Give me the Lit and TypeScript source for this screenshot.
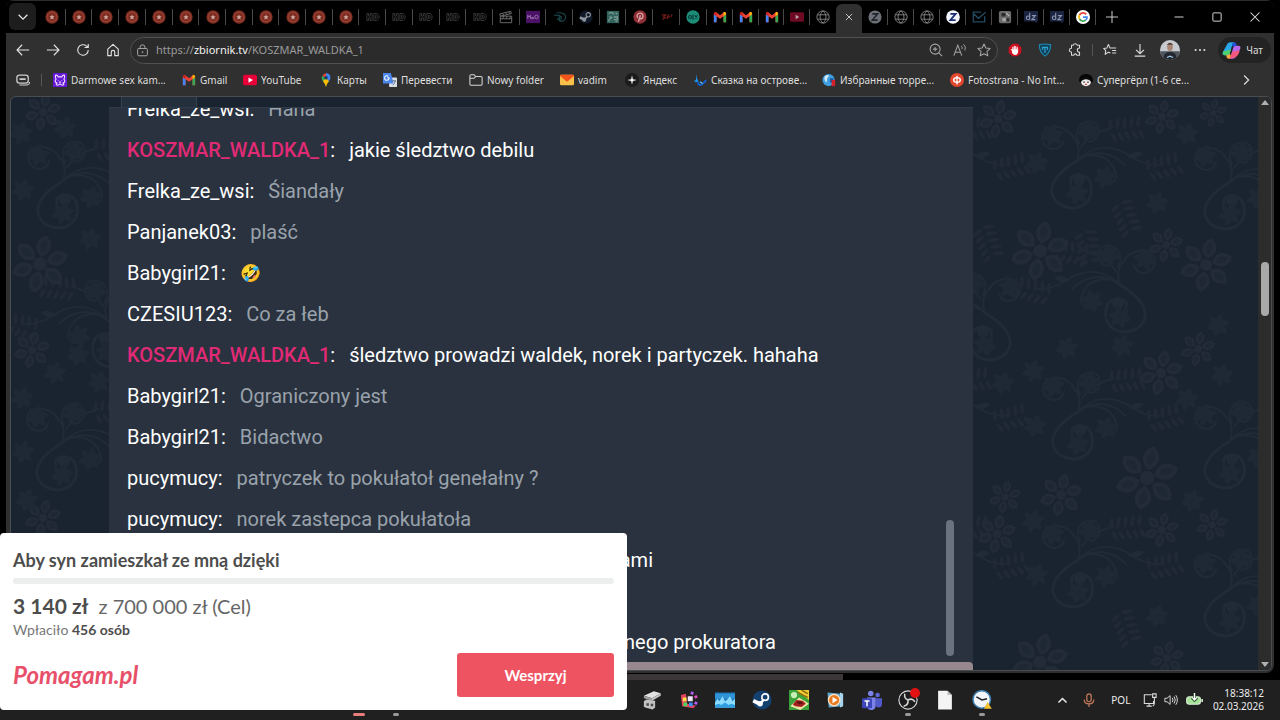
import { LitElement, html, svg, css, nothing } from "lit";
import { customElement } from "lit/decorators.js";
import { classMap } from "lit/directives/class-map.js";
import { styleMap } from "lit/directives/style-map.js";

/* ---------- icons, all on a 16 x 16 grid ---------- */

const icon = (body: unknown, size = 14) =>
  html`<svg width=${size} height=${size} viewBox="0 0 16 16" fill="none" aria-hidden="true">${body}</svg>`;

const ICONS: Record<string, unknown> = {
  star: svg`<circle cx="8" cy="8" r="7.600" fill="#7d2c22"/><circle cx="8" cy="8" r="5.400" fill="none" stroke="#944030" stroke-width="1.600"/><path d="M8 5l.9 2 2.100.2-1.600 1.500.5 2.100L8 9.700l-1.900 1.100.5-2.100L5 7.200 7.100 7z" fill="#d0aaa0"/>`,
  hd: svg`<path d="M1 4h2v3h2V4h2v8H5V9H3v3H1zM9 4h3c4 0 4 8 0 8H9zM11 6v4c2.600.4 2.600-4.400 0-4" stroke="#444" stroke-width=".9"/>`,
  clap: svg`<path d="M1.500 7h13v7.500h-13zM1.500 7l-.6-2.600L13.500 1.500l.6 2.500-12 3M4 3.800l1.600 2.300M7.500 3l1.600 2.300M11 2.200l1.500 2.300M1.500 10h13M4 10l1.500-3M8 10l1.500-3M12 10l1.500-3" stroke="#767676"/>`,
  max: svg`<path d="M0 1h16v14H0z" fill="#4b1166"/><path d="M2 10V6l1.500 2L5 6v4M6.500 8.500h2v1.500h-2zM14 8a2 2 0 1 1-4 0 2 2 0 0 1 4 0" stroke="#a078b4" stroke-width="1"/>`,
  disney: svg`<path d="M4 3.500c6-1.500 11 1 10.500 5S10 14 7 12M7.500 5.500v6.500M1 6c3-.5 6 .5 9 2M10.500 9.500c-2.500-1-5-.5-5.500.8 1 1.700 4 1.700 5.500.7" stroke="#1b4448" stroke-width="1.200"/>`,
  steam: svg`<circle cx="8" cy="8" r="7.500" fill="#101827"/><path d="M1 8.500l5 2.200" stroke="#8e959f" stroke-width="3"/><circle cx="6" cy="11" r="2.300" fill="#8e959f"/><path d="M6 11l4-4.500" stroke="#8e959f" stroke-width="2"/><circle cx="10.500" cy="5.500" r="2.500" fill="#101827" stroke="#8e959f" stroke-width="1.200"/>`,
  teal: svg`<path d="M1 1h14v14H1z" fill="#31635d"/><path d="M3 4c3-2 5-1 6 1M11 3l2 2M3 13c0-3 3-3 4-5M9 8h4v3H9M4 8h2M11 13h2" stroke="#7d9a92" stroke-width="1.500"/>`,
  pin: svg`<circle cx="8" cy="8" r="7.600" fill="#8e2f36"/><path d="M6.200 13.500L8.500 6M5.500 9C3.800 7 5 3.600 8.200 3.600c4.600 0 3.800 6.400.6 6.400-1 0-1.500-.8-1.500-.8" stroke="#d8a5a8" stroke-width="1.500"/>`,
  red: svg`<path d="M2 5.500h4.500L4 8l2 .5L3 11M8 10.500c.5-4 1.500-5 2.500-5M9 8h2.500M13.500 5l-.5 3" stroke="#6d1a16" stroke-width="1.500"/>`,
  olx: svg`<circle cx="8" cy="8" r="7.600" fill="#1c8d77"/><circle cx="4.600" cy="8" r="1.700" stroke="#063a33" stroke-width="1.200"/><path d="M8 5v6M10 6l3 4M13 6l-3 4" stroke="#063a33" stroke-width="1.300"/>`,
  gmail: svg`<path d="M1 3.500V14h3V7l4 3 4-3v7h3V3.500L13 2 8 6 3 2z" fill="#ea4335"/><path d="M1 5v9h3V7z" fill="#4285f4"/><path d="M15 5v9h-3V7z" fill="#34a853"/><path d="M12 7V2.800C13.500 1.500 15 2.500 15 4.500z" fill="#fbbc04"/><path d="M4 7V2.800C2.500 1.500 1 2.500 1 4.500z" fill="#c5221f"/>`,
  ytdim: svg`<path d="M0 4q0-1.500 1.500-1.500h13Q16 2.500 16 4v8q0 1.500-1.500 1.500h-13Q0 13.500 0 12z" fill="#6e0a24"/><path d="M6.500 5.500v5l4-2.500z" fill="#bda6ab"/>`,
  youtube: svg`<path d="M0 4q0-2 2-2h12q2 0 2 2v8q0 2-2 2H2q-2 0-2-2z" fill="#e8003a"/><path d="M6.300 5v6l5-3z" fill="#fff"/>`,
  globe: svg`<circle cx="8" cy="8" r="7" stroke="#8a8a8a"/><path d="M1.500 5.500h13M1.500 10.500h13M8 1c-4.500 4-4.500 10 0 14M8 1c4.500 4 4.500 10 0 14" stroke="#8a8a8a"/>`,
  zdim: svg`<circle cx="8" cy="8" r="7.500" fill="#6d7077"/><path d="M5 4.500h6L5 11.500h6" stroke="#20242c" stroke-width="1.900"/>`,
  zon: svg`<circle cx="8" cy="8" r="7.800" fill="#f3f6ff"/><path d="M5 4.500h6L5 11.500h6" stroke="#1c2f74" stroke-width="2"/>`,
  mail: svg`<path d="M14.500 7v6.500h-13v-11h9M1.500 4l6 5.500 8-7" stroke="#234a63" stroke-width="1.500"/>`,
  pic: svg`<rect x="1" y="1" width="14" height="14" rx="2" fill="#6b6b6b"/><path d="M4 3.500h5l-1 4H4zM9.500 9.500h3.500V13H10z" fill="#2b2b2b"/><path d="M5 9h4v4H5z" fill="#a5a5a5"/><path d="M9 3l4 4" stroke="#b8b8b8" stroke-width="1.500"/>`,
  dz: svg`<path d="M0 1h16v11l-2 3-2-2H0z" fill="#1b2440"/><path d="M6.500 3v8M6.500 8a2 2 0 1 1-3.600 0 2 2 0 0 1 3.600 0M9 6.500h4L9 11h4" stroke="#8a93ad" stroke-width="1.300"/>`,
  google: svg`<circle cx="8" cy="8" r="8" fill="#fff"/><path d="M11.700 5A4.600 4.600 0 0 0 4 5.700" stroke="#ea4335" stroke-width="2"/><path d="M4 5.700a4.600 4.600 0 0 0 0 4.600" stroke="#fbbc04" stroke-width="2"/><path d="M4 10.300a4.600 4.600 0 0 0 7.200 1" stroke="#34a853" stroke-width="2"/><path d="M8 8h4.600c0 1.500-.5 2.500-1.400 3.300" stroke="#4285f4" stroke-width="2"/>`,
  close: svg`<path d="M3 3l10 10M13 3L3 13" stroke="#e4e4e4" stroke-width="1.300"/>`,
  plus: svg`<path d="M8 0v16M0 8h16" stroke="#c4c4c4" stroke-width="1.400"/>`,
  min: svg`<path d="M2 8h12" stroke="#d8d8d8" stroke-width="1.300"/>`,
  square: svg`<rect x="2.500" y="2.500" width="11" height="11" rx="1" stroke="#d8d8d8" stroke-width="1.300"/>`,
  shut: svg`<path d="M2 2l12 12M14 2L2 14" stroke="#e4e4e4" stroke-width="1.400"/>`,
  down: svg`<path d="M3 5.500l5 5 5-5" stroke="#e2e2e2" stroke-width="1.500"/>`,
  up: svg`<path d="M3 10.500l5-5 5 5" stroke="#e8e8e8" stroke-width="1.900"/>`,
  right: svg`<path d="M5.500 2L11.500 8l-6 6" stroke="#dedede" stroke-width="1.600"/>`,
  back: svg`<path d="M15 8H1.500M7 2L1.200 8 7 14" stroke="#e0e0e0" stroke-width="1.300"/>`,
  fwd: svg`<path d="M1 8h13.500M9 2l5.800 6L9 14" stroke="#e0e0e0" stroke-width="1.300"/>`,
  reload: svg`<path d="M14 8a6 6 0 1 1-2-4.500L14 5M14 1v4.200H9.800" stroke="#e0e0e0" stroke-width="1.300"/>`,
  home: svg`<path d="M2 7l6-5.500L14 7v7.500H10V10.500q0-2-2-2t-2 2v4H2z" stroke="#e0e0e0" stroke-width="1.300" stroke-linejoin="round"/>`,
  lock: svg`<rect x="2" y="5.500" width="12" height="9" rx="1.500" stroke="#a8a8a8" stroke-width="1.200"/><path d="M5 5.500V4a3 3 0 0 1 6 0v1.500" stroke="#a8a8a8" stroke-width="1.200"/><circle cx="8" cy="10" r="1" fill="#a8a8a8"/>`,
  zoom: svg`<circle cx="7" cy="7" r="5.700" stroke="#a5a5a5" stroke-width="1.200"/><path d="M11 11l4 4M4.500 7h5M7 4.500v5" stroke="#a5a5a5" stroke-width="1.200"/>`,
  read: svg`<path d="M1 14.500L5.500 2.500 10 14.500M2.600 10.500h5.800" stroke="#a5a5a5" stroke-width="1.200"/><path d="M9.500 3.500q1.500 1.500.8 3.500M12 1.500Q15.500 4.500 13.500 8.500" stroke="#a5a5a5" stroke-width="1.100"/>`,
  fav: svg`<path d="M8 1.200l2.100 4.500 4.900.6-3.600 3.400.9 4.900L8 12.200l-4.300 2.400.9-4.900L1 6.300l4.900-.6z" stroke="#a5a5a5" stroke-width="1.200" stroke-linejoin="round"/>`,
  hand: svg`<path d="M5 .8h6L15.200 5v6L11 15.200H5L.8 11V5z" fill="#cf1020"/><path d="M5.500 8V5M7.200 8V3.700M8.900 8V4M10.600 9V5.300M5 8.500l-1.200-1M5 8h6v2q-.3 3-3 3Q5.500 13 5 10z" stroke="#fff" fill="#fff" stroke-width="1.200" stroke-linecap="round"/>`,
  shield: svg`<path d="M1.500 2q6.500-1.500 13 0-.2 9-6.500 13Q1.700 11 1.500 2z" fill="#12415a" stroke="#1a8db8" stroke-width="1.200"/><path d="M4.500 5h7M8 5v6.500M5.300 5v3M10.700 5v3" stroke="#2ba6d0" stroke-width="1.300"/>`,
  puzzle: svg`<path d="M4 2.500h2Q6.500.8 8.300.8T10.600 2.500h2.600v3.300q-2.600.2-2.600 2.400t2.600 2.400v3.300h-3.200q-.2-1.500-1.700-1.500t-1.700 1.500H4v-3.500Q1.500 10.200 1.500 8.200T4 6z" stroke="#dadada" stroke-width="1.200" stroke-linejoin="round"/>`,
  favs: svg`<path d="M8.500 11.500L6 10.500l-3.500 2.500.6-4.300L.8 6.200l3.700-.6L6.200 1.800l1.700 3.800H15M10.500 8.500H15M10.500 11.500H15" stroke="#dadada" stroke-width="1.200" stroke-linejoin="round"/>`,
  download: svg`<path d="M8 1v11M3.500 7.800L8 12.200l4.500-4.400M2 15h12" stroke="#dadada" stroke-width="1.300"/>`,
  dots: svg`<circle cx="3" cy="8" r="1.200" fill="#ddd"/><circle cx="8" cy="8" r="1.200" fill="#ddd"/><circle cx="13" cy="8" r="1.200" fill="#ddd"/>`,
  avatar: svg`<defs><clipPath id="av"><circle cx="8" cy="8" r="8"/></clipPath></defs><g clip-path="url(#av)"><path d="M0 0h16v16H0z" fill="#c7cbd0"/><path d="M0 9h16v7H0z" fill="#4f565f"/><path d="M2.500 16q0-6.500 5.500-6.500T13.500 16z" fill="#22262e"/><ellipse cx="8" cy="5.500" rx="2.300" ry="3.200" fill="#a88474"/><path d="M5.500 4Q8 .5 10.500 4 8 3 5.500 4" fill="#4b3b33"/><path d="M5.500 14l2.500-1 2.500 1" stroke="#9ec8e8"/></g>`,
  copilot: svg`<path d="M4.500 2.500Q5 1 7 1h3.500q-1.500.5-2 2.500L6.500 10.500Q6 12 4 12H2Q0 12 .6 9.500z" fill="#2aa6ea"/><path d="M.8 9Q.5 12 2.500 12H4q2 0 2.500-1.500L7.500 7z" fill="#4fd06a"/><path d="M11.500 13.500Q11 15 9 15H5.500q1.500-.5 2-2.500L9.500 5.500Q10 4 12 4h2q2 0 1.400 2.500z" fill="#b867e8"/><path d="M15 8q-1 4-3.500 5.500T5.500 15q1.500-.5 2-2.500L8.500 9z" fill="#f4587c"/><path d="M8.500 3.500Q9 1 10.500 1t2 3H12q-2 0-2.500 1.500z" fill="#2452d8"/><path d="M7.500 12.500Q7 15 5.500 15t-2-3H4q2 0 2.500-1.500z" fill="#f6a63c"/>`,
  stack: svg`<rect x="1" y="2.500" width="13" height="9" rx="3" stroke="#ccc" stroke-width="1.500"/><path d="M4 7h7" stroke="#ccc" stroke-width="2"/><path d="M4 13.800h8.500q3 0 3-3.500" stroke="#ccc" stroke-width="1.200"/>`,
  cat: svg`<rect width="16" height="16" rx="1" fill="#6519d8"/><path d="M3 2.500Q5 2 6 4.500h4Q11 2 13 2.500q1 2.500-.5 4.500Q15 10 11.500 11.500q2 2-.5 2.500-1.500 0-3-1.500Q6.500 14 5 14q-2.500-.5-.5-2.500Q1 10 3.500 7 2 5 3 2.500zM6 8v.5M10 8v.5M7 10q1 1 2 0" stroke="#f2dcff" stroke-width="1.300"/>`,
  maps: svg`<path d="M8 16Q7 12 4.500 9.500 2 6 4 3L8 6z" fill="#34a853"/><path d="M4 3Q5.500.5 8 .3L8 6z" fill="#ea4335"/><path d="M8 .3q5 0 5 5.200 0 2-1.500 4L8 6z" fill="#4285f4"/><path d="M11.500 9.500Q9 12 8 16 7 12 4.500 9.500L8 6z" fill="#fbbc04"/><circle cx="8" cy="5.500" r="2" fill="#17395e"/>`,
  translate: svg`<rect x="7" y="5" width="9" height="11" rx="1" fill="#dbe0e6"/><path d="M0 0h9l3 12H0z" fill="#4a86ec"/><path d="M7 5.500H4.800M7 5.500A2.600 2.600 0 1 1 6 3.700" stroke="#fff" stroke-width="1.200"/><path d="M10 9h5M12.500 8v1M11 14q3-2 3-5" stroke="#5c6d84"/>`,
  folder: svg`<path d="M1 3.500Q1 2 2.500 2H6l1.500 2h6Q15 4 15 5.500v7Q15 14 13.500 14h-11Q1 14 1 12.500zM1 6h5l1.500-2" stroke="#d5d5d5" stroke-width="1.200"/>`,
  envelope: svg`<rect y="2" width="16" height="12" rx="1.500" fill="#f7c04a"/><path d="M0 3.500Q0 2 1.500 2h13Q16 2 16 3.500L8 10z" fill="#f2541b"/>`,
  yandex: svg`<circle cx="8" cy="8" r="8" fill="#1b1b1b"/><path d="M8 2.500l1 4.500 4.500 1L9 9l-1 4.500L7 9 2.500 8 7 7z" fill="#fff"/>`,
  bird: svg`<path d="M3.500 1l1 5 2 4-3 .5-2.500-1.500 2.500-1z" fill="#1a9df2"/><path d="M5 8l2.500 4.500L11 12l2-3.500 3-1-1 2.500-3.500 3.500-3.500 1.500-3-2z" fill="#1363d6"/><path d="M8 10l3 2" stroke="#5cc5ff" stroke-width="1.500"/>`,
  earth: svg`<circle cx="7.500" cy="8" r="7" fill="#3f9fe0"/><path d="M3 4q3-3 5-1l-2 3-1 5Q2 8 3 4z" fill="#d5e9f5"/><path d="M9 6h4v5H9z" fill="#1c5aa0"/><path d="M11 8h4v7h-4z" fill="#d4202c"/>`,
  foto: svg`<circle cx="8" cy="8" r="8" fill="#e2472d"/><ellipse cx="8" cy="8" rx="3.800" ry="2.700" stroke="#fff" stroke-width="1.600"/><path d="M8 3v10" stroke="#fff" stroke-width="1.600"/>`,
  girl: svg`<path d="M0 9Q0 1 8 1t8 8l-2 2H2z" fill="#050505"/><ellipse cx="8" cy="10.500" rx="5.500" ry="4.500" fill="#f0ebe8"/><path d="M2.500 9Q8 5 13.500 9V6Q8 2 2.500 6z" fill="#0a0a0a"/><path d="M5 10.500h1.500M9.500 10.500H11" stroke="#111" stroke-width="1.300"/><path d="M7 13h2" stroke="#c23a3a" stroke-width="1.200"/>`,
};

/* Taskbar programs */
const APPS: Record<string, unknown> = {
  drive: svg`<path d="M1.500 4.500l8-3.500 5.500 1.500-7 4z" fill="#e3e3e3"/><path d="M1.500 4.500L8 6.500v2l-6.500-2z" fill="#9d9d9d"/><path d="M8 6.500l7-4v2l-7 4z" fill="#c4c4c4"/><path d="M1.500 9l2-1.500 7 1V14l-2 1.500-6-1.500-1-1z" fill="#c2c2c2"/><path d="M3.500 10.500h2v2h-2zM7 11h2v2H7z" fill="#4a4a4a"/>`,
  cubes: svg`<path d="M1.500 4l4-1 1 8 7 1.500-2 2-9-1.500z" fill="#e7425c"/><path d="M3 6h3v3H3z" fill="#ffe14a"/><path d="M3.500 10h3v3h-3z" fill="#4fd35d"/><path d="M7 5h4v4H7z" fill="#f1e6fa"/><path d="M8 10h3v3H8z" fill="#3e8cf5"/><path d="M10 1l2 1-1 2-2-1zM13 9l2 1-1 2-2-1z" fill="#b75cff"/><path d="M12 5l2-1 1 2-2 1z" fill="#e84cc4"/>`,
  graph: svg`<path d="M0 2h16v12H0z" fill="#1d78bd"/><path d="M0 3h16v4H0z" fill="#2f93d6"/><path d="M0 10l2-3 1.500 2L6 5l2 4 1.500-1L12 5l2 4 2-2v7H0z" fill="#8bdcff"/><path d="M0 12l3-1 2 1 3-2 3 2 2-1 3 1v2H0z" fill="#2d9fe2"/>`,
  steamApp: svg`<circle cx="8" cy="8" r="7.600" fill="#14406f"/><path d="M1 8.500l5 2.500" stroke="#fff" stroke-width="3"/><circle cx="6.500" cy="11" r="2.200" fill="#fff"/><path d="M6.500 11L10 7" stroke="#fff" stroke-width="2"/><circle cx="10.500" cy="5.700" r="2.600" fill="#14406f" stroke="#fff" stroke-width="1.300"/>`,
  game: svg`<path d="M0 0h16v16H0z" fill="#3aa33a"/><path d="M6 0h10v8z" fill="#f0cf35"/><path d="M7 2l8 4M10 0l5 3" stroke="#946f10" stroke-width="1.200"/><circle cx="4" cy="4" r="2.500" fill="#c8f0b8"/><path d="M1 13l7-7 8 5-7 5z" fill="#f0e4a8"/><path d="M3 11.500l3-3.500 5 .5 2.500 2.500-3.500 2.500-5-.5z" fill="#a52020"/><path d="M5.500 9.500l3.500-.5 2.500 1.500-3 1z" fill="#5a1313"/>`,
  player: svg`<path d="M2 2l11 1 1 10-11 1z" fill="#5fa7cf"/><path d="M12 2l2.500 1v10L12 14z" fill="#a8d4ec"/><circle cx="7.300" cy="8" r="4.600" fill="#e97c22" stroke="#fde2c2" stroke-width="1"/><path d="M6 5.500v5l4-2.500z" fill="#fff"/>`,
  teams: svg`<circle cx="7" cy="2.700" r="2.200" fill="#7b83eb"/><circle cx="12.500" cy="4" r="1.800" fill="#6068d8"/><path d="M4 6h7v6q0 4-3.500 4T4 12z" fill="#7b83eb"/><path d="M11 6.500h5V11q0 3-2.500 3T11 12z" fill="#5059c9"/><rect y="6.500" width="8" height="8" rx="1" fill="#3c46b8"/><path d="M2 8.800h4M4 9v4" stroke="#fff" stroke-width="1.200"/>`,
  obs: svg`<circle cx="8" cy="8" r="7.300" fill="#1c1b1d" stroke="#d6d6d6" stroke-width=".9"/><path d="M8 8Q4.500 6.500 5.500 3M8 8q3.500-2 5.500 1.500M8 8q.5 4-3.500 5" stroke="#d6d6d6" stroke-width="1.200"/>`,
  page: svg`<path d="M2.500 .5h7.500L13.500 4v11.500h-11z" fill="#f4f4f4"/><path d="M10 .5V4h3.500z" fill="#b9b9b9"/>`,
  clock: svg`<circle cx="7.800" cy="7.500" r="7" fill="#f2f6fa" stroke="#3f7fb0" stroke-width="1.200"/><path d="M3.500 5.500L8 8l4-1" stroke="#222" stroke-width="1.200"/><path d="M12.500 9.500l3.300 5.500H9.500z" fill="#f5c430"/>`,
};

/* ---------- data ---------- */

type Tab = { i: string; t: string; live?: boolean };
const rep = (n: number, i: string, t: string): Tab[] => Array.from({ length: n }, () => ({ i, t }));

const OLD_TABS: Tab[] = [
  ...rep(12, "star", "Video"), ...rep(5, "hd", "HD"),
  { i: "clap", t: "Film" }, { i: "max", t: "Max" }, { i: "disney", t: "Disney" }, { i: "steam", t: "Steam" },
  { i: "teal", t: "Photo" }, { i: "pin", t: "Pinterest" }, { i: "red", t: "Site" }, { i: "olx", t: "OLX" },
];
const NEW_TABS: Tab[] = [
  ...rep(3, "gmail", "Gmail"), { i: "ytdim", t: "YouTube" }, { i: "globe", t: "Page" },
  { i: "close", t: "Close tab", live: true }, { i: "zdim", t: "Zbiornik" }, ...rep(2, "globe", "Page"),
  { i: "zon", t: "Zbiornik" }, { i: "mail", t: "Mail" }, { i: "pic", t: "Pictures" }, ...rep(2, "dz", "dz"),
  { i: "google", t: "Google" },
];

/* w: relative share of the favorites bar */
const BOOKMARKS = [
  { i: "cat", t: "Darmowe sex kam...", w: 129 }, { i: "gmail", t: "Gmail", w: 61 },
  { i: "youtube", t: "YouTube", w: 76 }, { i: "maps", t: "Карты", w: 64 },
  { i: "translate", t: "Перевести", w: 86 }, { i: "folder", t: "Nowy folder", w: 91 },
  { i: "envelope", t: "vadim", w: 65 }, { i: "yandex", t: "Яндекс", w: 68 },
  { i: "bird", t: "Сказка на острове...", w: 129 }, { i: "earth", t: "Избранные торре...", w: 128 },
  { i: "foto", t: "Fotostrana - No Int...", w: 129 }, { i: "girl", t: "Супергёрл (1-6 се...", w: 126 },
];

/* end: right edge of a line that starts under the fundraiser card */
type Message = { who?: string; text: string; host?: boolean; emoji?: boolean; end?: number };
const HOST = "KOSZMAR_WALDKA_1";
const MESSAGES: Message[] = [
  { who: "Frelka_ze_wsi", text: "Hana" },
  { who: HOST, text: "jakie śledztwo debilu", host: true },
  { who: "Frelka_ze_wsi", text: "Śiandały" },
  { who: "Panjanek03", text: "plaść" },
  { who: "Babygirl21", text: "🤣", emoji: true },
  { who: "CZESIU123", text: "Co za łeb" },
  { who: HOST, text: "śledztwo prowadzi waldek, norek i partyczek. hahaha", host: true },
  { who: "Babygirl21", text: "Ograniczony jest" },
  { who: "Babygirl21", text: "Bidactwo" },
  { who: "pucymucy", text: "patryczek to pokułatoł genełałny ?" },
  { who: "pucymucy", text: "norek zastepca pokułatoła" },
  { text: "ami", host: true, end: 526 },
  { text: "", end: 0 },
  { text: "nego prokuratora", host: true, end: 649 },
];

/* ---------- damask wallpaper ---------- */

const petals = (n: number, d: string) =>
  Array.from({ length: n }, (_, k) => svg`<path d=${d} transform=${`rotate(${(360 / n) * k + 12})`}/>`);
const flower = (x: number, y: number, r: number) => svg`<g transform=${`translate(${x} ${y}) scale(${r / 30})`}>
  <circle r="7" fill="#232b38"/><g fill="#1e2834" stroke="#232b38" stroke-width="4">${petals(6, "M0-10C-9-16-7-24 0-29C7-24 8-16 0-10z")}</g></g>`;
const bud = (x: number, y: number) => svg`<g transform=${`translate(${x} ${y})`} fill="#1f2935">${petals(6, "M0 0C-5-4-4-8 1-12C5-7 4-4 0 0z")}</g>`;
const spray = (x: number, y: number, a: number) => svg`<g transform=${`translate(${x} ${y}) rotate(${a})`} fill="#202935">
  ${[0, 7, 14, 21, 28].map((d) => svg`<ellipse cx=${d - 14} cy="-6" rx="2" ry="6" transform=${`rotate(12 ${d - 14} -6)`}/><ellipse cx=${d - 12} cy="7" rx="2" ry="5" transform=${`rotate(-25 ${d - 12} 7)`}/>`)}</g>`;
const swirl = (x: number, y: number) => svg`<g transform=${`translate(${x} ${y})`}>
  <g fill="none" stroke="#212b37" stroke-width="2" stroke-linecap="round">
    <path stroke-width="3" d="M0-2C-14 6-27 18-25 30C-22 44-4 49 8 41C18 32 16 14 4 12C-3 11-8 15-6 20"/>
    <path d="M0-2C4-14 1-22-6-28M-3-24C-8-38-34-42-35-26C-35-12-16-10-14-22M2-20C-6-34 8-46 18-40C27-34 20-18 10-22"/>
    <path d="M0-2C16-14 34-12 48 2M0-2C16-20 38-18 56-5C66 1 74 2 82 2M4-6C16-10 32-8 38 8C42 16 34 24 26 20M4-16C14-30 26-32 36-36"/>
  </g>
  <circle cx="2" cy="16" r="6" fill="#212b37"/>
  ${bud(-25, -28)}${bud(11, -32)}${bud(0, 30)}${bud(28, 14)}${spray(48, -34, -6)}${spray(86, 4, -14)}
  <path d="M50-6q8-8 16-4-6 8-16 4z" fill="#212b37"/></g>`;
/* the same branch, growing the other way */
const turned = (x: number, y: number) => svg`<g transform=${`translate(${x} ${y}) scale(-1 1)`}>${swirl(0, 0)}</g>`;

const LEFT_ART = svg`
  ${swirl(52, 86)}${swirl(51, 348)}${turned(96, 225)}
  ${flower(29, 167, 28)}${flower(32, 15, 18)}${flower(21, 253, 18)}${flower(32, 421, 18)}
  ${[[12, 93], [44, 276], [11, 301], [12, 355], [67, 258], [88, 285], [16, 403], [54, 31], [79, 142], [10, 36]].map(([x, y]) => bud(x, y))}`;
const RIGHT_ART = svg`
  ${[[107, 66], [260, 87], [108, 317], [260, 346], [108, 465], [260, 494], [-46, 66], [-46, 317], [-46, 465]].map(([x, y]) => swirl(x, y))}
  ${turned(150, 190)}${turned(15, 218)}
  ${[[70, 154, 29], [236, 168, 26], [177, 381, 31], [70, 565, 28], [28, 22, 19], [192, 20, 17], [243, 16, 14], [196, 148, 17], [191, 276, 22], [228, 252, 17], [35, 400, 16], [91, 398, 21], [27, 437, 19], [192, 433, 17], [242, 428, 16], [197, 561, 17]].map(([x, y, r]) => flower(x, y, r))}
  ${[[67, 66], [217, 37], [187, 106], [97, 251], [152, 249], [33, 286], [63, 274], [65, 329], [252, 278], [217, 302], [222, 404], [67, 478], [187, 519], [248, 228], [63, 424]].map(([x, y]) => bud(x, y))}
  ${spray(156, 120, 70)}${spray(118, 150, 80)}${spray(18, 145, 70)}${spray(156, 530, 70)}`;

/* ---------- browser chrome ---------- */

@customElement("browser-chrome")
class BrowserChrome extends LitElement {
  static styles = css`
    :host { display: block; color: #dedede; font: 10px/14px "Noto Sans", "Open Sans", sans-serif; }
    * { box-sizing: border-box; }
    button { appearance: none; background: none; border: 0; padding: 0; margin: 0; color: inherit; font: inherit; display: flex; align-items: center; justify-content: center; }
    svg { display: block; flex: none; }
    .strip { display: flex; height: 33px; background: #000; align-items: stretch; border-top: 1px solid #2c2c2c; }
    .list { width: 27px; height: 27px; margin: 2px 3px 0; background: #1d1d1d; border-radius: 6px; }
    .tabs { flex: 1056; display: flex; min-width: 0; }
    .old { flex: 667; display: flex; min-width: 0; }
    .new { flex: 389; display: flex; min-width: 0; }
    .tab { flex: 1; min-width: 0; position: relative; }
    .tab::after { content: ""; position: absolute; right: 0; top: 8px; height: 16px; width: 1px; background: #484848; }
    .tab.live { background: #303030; border-radius: 6px 6px 0 0; margin-top: 3px; padding-bottom: 3px; }
    .tab.live::after, .tab.quiet::after { display: none; }
    .plus { width: 32px; }
    .caption { display: flex; margin-left: 32px; }
    .caption button { width: 38px; }
    .bar { display: flex; align-items: center; height: 34px; background: #303030; padding-left: 2px; }
    .bar > button { width: 30px; height: 30px; flex: none; }
    .address { flex: 1; display: flex; align-items: center; height: 27px; margin: 0 2px; padding: 0 1px 0 5px; background: #2b2b2b; border: 1px solid #515151; border-radius: 14px; min-width: 0; }
    .address button { width: 24px; height: 24px; }
    .url { flex: 1; position: relative; margin-left: 7px; font-size: 11px; line-height: 16px; color: #9b9b9b; white-space: nowrap; min-width: 0; }
    .url b { font-weight: 400; color: #f2f2f2; }
    .url label { display: block; }
    .url input { position: absolute; inset: 0; width: 100%; border: 0; padding: 0; background: transparent; color: transparent; font: inherit; outline: none; }
    .rule { width: 1px; height: 12px; margin: 0 2px; background: #555; flex: none; }
    .bar > .chat { width: auto; height: 26px; gap: 5px; padding: 0 8px 0 4px; margin: 0 3px; background: #232323; border-radius: 13px; }
    .marks { display: flex; align-items: center; height: 27px; padding: 0 0 2px 10px; background: #303030; }
    .marks .rule { margin: 0 11px; }
    .links { display: flex; flex: 1; min-width: 0; }
    .mark { display: flex; align-items: center; gap: 4px; color: inherit; text-decoration: none; white-space: nowrap; min-width: 0; }
    .more { width: 30px; height: 24px; margin: 0 13px 0 26px; }
  `;

  tab(t: Tab, k: number, all: Tab[]) {
    return html`<button class=${classMap({ tab: true, live: !!t.live, quiet: !!all[k + 1]?.live })} aria-label=${t.t}>${icon(ICONS[t.i], t.live ? 10 : 14)}</button>`;
  }
  tool(name: string, label: string, size = 14) {
    return html`<button aria-label=${label}>${icon(ICONS[name], size)}</button>`;
  }

  render() {
    return html`
      <div class="strip">
        <button class="list" aria-label="Tab list">${icon(ICONS.down)}</button>
        <div class="tabs">
          <div class="old">${OLD_TABS.map((t, k) => this.tab(t, k, OLD_TABS))}</div>
          <div class="new">${NEW_TABS.map((t, k) => this.tab(t, k, NEW_TABS))}</div>
        </div>
        <button class="plus" aria-label="New tab">${icon(ICONS.plus, 12)}</button>
        <div class="caption">${this.tool("min", "Minimize", 12)}${this.tool("square", "Maximize", 12)}${this.tool("shut", "Close", 12)}</div>
      </div>
      <div class="bar">
        ${this.tool("back", "Back")}${this.tool("fwd", "Forward")}${this.tool("reload", "Reload")}${this.tool("home", "Home")}
        <div class="address">
          ${icon(ICONS.lock, 13)}
          <div class="url">
            <label for="url">https://<b>zbiornik.tv</b>/KOSZMAR_WALDKA_1</label>
            <input id="url" type="text" />
          </div>
          ${this.tool("zoom", "Zoom", 14)}${this.tool("read", "Read aloud", 14)}${this.tool("fav", "Add to favorites", 14)}
        </div>
        ${this.tool("hand", "Ad blocker")}${this.tool("shield", "Shield")}${this.tool("puzzle", "Extensions")}
        <span class="rule"></span>
        ${this.tool("favs", "Favorites")}${this.tool("download", "Downloads")}${this.tool("avatar", "Profile", 20)}${this.tool("dots", "Menu")}
        <button class="chat">${icon(ICONS.copilot, 19)}Чат</button>
      </div>
      <nav class="marks">
        ${icon(ICONS.stack)}<span class="rule"></span>
        <div class="links">
          ${BOOKMARKS.map((b) => html`<a class="mark" href="#" style=${styleMap({ flex: `${b.w} 1 0` })}>${icon(ICONS[b.i])}${b.t}</a>`)}
        </div>
        <button class="more" aria-label="More bookmarks">${icon(ICONS.right, 12)}</button>
      </nav>`;
  }
}

/* ---------- page with the chat ---------- */

@customElement("chat-page")
class ChatPage extends LitElement {
  static styles = css`
    :host { display: flex; min-height: 0; overflow: hidden; background: #1a2430; font-family: Roboto, sans-serif; }
    * { box-sizing: border-box; }
    .view { flex: 1; position: relative; display: flex; min-width: 0; overflow: hidden; }
    .art { position: absolute; top: 0; width: 288px; height: 100%; overflow: hidden; }
    .art.l { left: 0; width: 98px; }
    .art.r { right: 0; }
    .art svg { display: block; }
    .column { position: relative; flex: none; width: 69.25%; margin-left: 98px; display: flex; flex-direction: column; min-height: 0; }
    .top { flex: none; height: 10px; padding-left: 12px; }
    .chip { width: 76px; height: 10px; background: #232f3c; border: solid #354250; border-width: 0 1px; }
    .panel { flex: 1; display: flex; min-height: 0; background: #29323e; border-top: 1px solid #303b48; overflow: hidden; }
    .log { flex: 1; margin: 0; padding: 0 0 0 18px; list-style: none; display: flex; flex-direction: column; justify-content: flex-end; min-height: 0; }
    .row { flex: none; display: flex; align-items: center; gap: 14px; height: 41px; font-size: 20px; line-height: 24px; color: #9aa2ac; white-space: nowrap; }
    .who, .row.host { color: #fff; }
    .row.host .who b { color: #e12a76; font-weight: 500; }
    .who b { font-weight: 400; }
    .row.tail { justify-content: flex-end; }
    .emoji { font-size: 17px; }
    .thumb { align-self: flex-end; flex: none; width: 8px; height: 136px; margin: 0 19px 6px 0; border-radius: 4px; background: #69727e; }
    .entry { flex: none; height: 8px; background: #97878f; border-radius: 0 4px 0 0; }
    .scroll { flex: none; width: 13px; background: #2c2c2c; display: flex; flex-direction: column; align-items: center; justify-content: space-between; padding: 3px 0; position: relative; }
    .scroll i { border: 4px solid transparent; border-top-width: 0; border-bottom: 5px solid #b0b0b0; }
    .scroll i:last-child { transform: rotate(180deg); }
    .grip { position: absolute; top: 165px; width: 8px; height: 54px; border-radius: 4px; background: #a9a9a9; }
  `;

  row(m: Message) {
    const width = m.end === undefined ? {} : { width: `${m.end}px` };
    return html`<li class=${classMap({ row: true, host: !!m.host, tail: !m.who })} style=${styleMap(width)}>
      ${m.who ? html`<span class="who"><b>${m.who}</b>:</span>` : nothing}
      <span class=${m.emoji ? "emoji" : "text"}>${m.text}</span>
    </li>`;
  }

  render() {
    return html`
      <div class="view">
        <div class="art l"><svg width="98" height="574">${LEFT_ART}</svg></div>
        <div class="art r"><svg width="288" height="574">${RIGHT_ART}</svg></div>
        <main class="column">
          <div class="top"><div class="chip"></div></div>
          <section class="panel">
            <ul class="log">${MESSAGES.map((m) => this.row(m))}</ul>
            <div class="thumb"></div>
          </section>
          <div class="entry"></div>
        </main>
      </div>
      <div class="scroll"><i></i><div class="grip"></div><i></i></div>`;
  }
}

/* ---------- fundraiser overlay ---------- */

@customElement("donation-card")
class DonationCard extends LitElement {
  static styles = css`
    :host { display: flex; flex-direction: column; box-sizing: border-box; padding: 15px 13px 13px; background: #fff; border-radius: 4px; color: #4d4d4d; font-family: Lato, sans-serif; }
    h2 { margin: 0; font-size: 18px; line-height: 24px; font-weight: 700; }
    .progress { height: 6px; margin: 6px 0 10px; border-radius: 3px; background: #eceeee; }
    .sum { display: flex; align-items: baseline; gap: 10px; font-size: 20px; line-height: 24px; color: #666; }
    .sum b { font-size: 21px; font-weight: 700; color: #4d4d4d; }
    .people { font-size: 14px; line-height: 24px; color: #777; }
    .people b { font-weight: 700; color: #4d4d4d; }
    .foot { display: flex; justify-content: space-between; align-items: center; margin-top: 11px; }
    .logo { color: #e8506a; font-size: 24px; line-height: 32px; font-style: italic; font-weight: 700; font-family: "Brush Script MT", Lato, cursive; text-decoration: none; }
    button { width: 157px; height: 44px; border: 0; border-radius: 3px; background: #ee5361; color: #fff; font: 700 15px/20px Lato, sans-serif; }
  `;
  render() {
    return html`
      <h2>Aby syn zamieszkał ze mną dzięki</h2>
      <div class="progress"></div>
      <div class="sum"><b>3 140 zł</b><span>z 700 000 zł (Cel)</span></div>
      <div class="people">Wpłaciło <b>456 osób</b></div>
      <div class="foot"><a class="logo" href="#">Pomagam.pl</a><button>Wesprzyj</button></div>`;
  }
}

/* ---------- taskbar ---------- */

@customElement("task-bar")
class TaskBar extends LitElement {
  static styles = css`
    :host { display: flex; align-items: stretch; height: 40px; padding-right: 16px; box-sizing: border-box; background: #202020; color: #ececec; font: 10px/13px "Noto Sans", "Open Sans", sans-serif; }
    button { appearance: none; background: none; border: 0; padding: 0; margin: 0; color: inherit; font: inherit; display: flex; align-items: center; justify-content: center; }
    svg { display: block; }
    .side { flex: 341; }
    .apps { flex: 659; display: flex; }
    .app { flex: 1; min-width: 0; position: relative; }
    .dot::after { content: ""; position: absolute; bottom: 4px; left: 50%; width: 6px; height: 3px; margin-left: -3px; border-radius: 2px; background: #9a9a9a; }
    .hot::after { content: ""; position: absolute; bottom: 4px; left: 50%; width: 12px; height: 3px; margin-left: -6px; border-radius: 2px; background: #e97f7c; }
    .rec::before { content: ""; position: absolute; top: 8px; left: 50%; width: 10px; height: 10px; margin-left: 2px; border-radius: 5px; background: #e01212; }
    .tray { flex: 264; display: flex; align-items: center; justify-content: flex-end; }
    .tray button { height: 40px; }
    .w { width: 27px; }
    .lang { width: 36px; }
    .s { width: 22px; }
    .n { width: 20px; }
    .time { flex-direction: column; align-items: flex-end; margin-left: 5px; text-align: right; }
  `;
  render() {
    const names = Object.keys(APPS);
    const slots = Array.from({ length: 18 }, (_, k) => names[k - 8]);
    return html`
      <div class="side"></div>
      <div class="apps">
        ${slots.map((n, k) => html`<button class=${classMap({ app: true, hot: k === 0, rec: n === "obs", dot: k === 1 || n === "obs" || n === "clock" })} aria-label=${n ?? "App"}>${n ? icon(APPS[n], 20) : nothing}</button>`)}
      </div>
      <div class="tray">
        <button class="w" aria-label="Hidden icons">${icon(ICONS.up, 13)}</button>
        <button class="w" aria-label="Microphone">${icon(svg`<rect x="5.500" y="1" width="5" height="9" rx="2.500" stroke="#c97b5c" stroke-width="1.400"/><path d="M2.500 7.500q0 5 5.500 5t5.500-5M8 12.500V16" stroke="#c97b5c" stroke-width="1.300"/>`)}</button>
        <button class="lang">POL</button>
        <button class="s" aria-label="Network">${icon(svg`<path d="M10 2H1.500v10H12V9M4 15h6M7 12v3M11 1h4v4h-4zM13 5v7q0 2-2 3" stroke="#dcdcdc" stroke-width="1.200"/>`)}</button>
        <button class="n" aria-label="Volume">${icon(svg`<path d="M1 6h2.500L7 3v10L3.500 10H1zM9.500 5.500q1.500 2.500 0 5M11.500 4q2.800 4 0 8M13.500 2.500q3.500 5.500 0 11" stroke="#dcdcdc" stroke-width="1.100"/>`)}</button>
        <button class="w" aria-label="Battery">${icon(svg`<rect x=".6" y="4.500" width="13" height="7" rx="2.500" fill="#a8e39a" stroke="#d6ead2"/><path d="M15.200 6.500v3" stroke="#d6ead2" stroke-width="1.500"/><path d="M8 1v6M5.500 5.500L8 8l2.500-2.500" stroke="#2a522a" stroke-width="2.400"/><path d="M8 1v6M5.800 5L8 7.500 10.200 5" stroke="#fff" stroke-width="1.200"/>`, 17)}</button>
        <button class="time"><span>18:38:12</span><span>02.03.2026</span></button>
      </div>`;
  }
}

/* ---------- desktop ---------- */

@customElement("app-root")
class AppRoot extends LitElement {
  static styles = css`
    :host { display: flex; flex-direction: column; position: relative; height: 100vh; overflow: hidden; background: #000; }
    .window { flex: 1; min-height: 0; display: flex; flex-direction: column; margin: 0 6px; background: #303030; border-radius: 8px; overflow: hidden; }
    chat-page { flex: 1; margin: 2px 2px 2px 4px; border: 1px solid #4a4d50; border-radius: 6px; }
    .ledge { flex: none; height: 6px; width: 843px; max-width: 100%; margin-top: 1px; background: #3b3738; }
    donation-card { position: absolute; left: 0; bottom: 10px; width: 627px; max-width: 100%; }
  `;
  render() {
    return html`
      <div class="window"><browser-chrome></browser-chrome><chat-page></chat-page></div>
      <div class="ledge"></div>
      <task-bar></task-bar>
      <donation-card></donation-card>`;
  }
}
